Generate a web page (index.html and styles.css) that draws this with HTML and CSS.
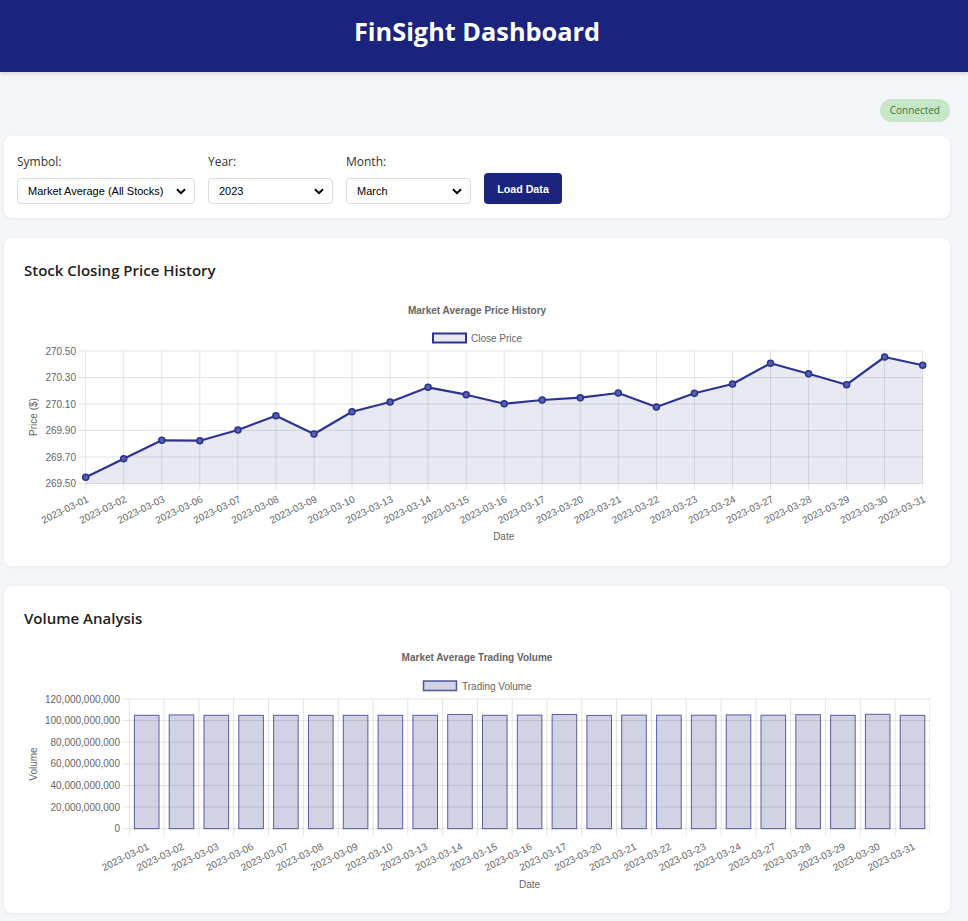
FILE: index.html
```html
<!DOCTYPE html>
<html lang="en">
<head>
<meta charset="utf-8">
<title>FinSight Dashboard</title>
<link rel="stylesheet" href="styles.css">
</head>
<body>
<header class="app-header">
  <h1 class="app-title">FinSight Dashboard</h1>
</header>
<main class="container">
  <div class="status-row"><span class="status-badge">Connected</span></div>

  <section class="card controls">
    <div class="control">
      <label class="control-label" for="symbol">Symbol:</label>
      <select id="symbol" class="select select-wide"><option>Market Average (All Stocks)</option></select>
    </div>
    <div class="control">
      <label class="control-label" for="year">Year:</label>
      <select id="year" class="select"><option>2023</option></select>
    </div>
    <div class="control">
      <label class="control-label" for="month">Month:</label>
      <select id="month" class="select"><option>March</option></select>
    </div>
    <button class="btn-load">Load Data</button>
  </section>

  <section class="card chart-card">
    <h3 class="card-title">Stock Closing Price History</h3>
    <svg class="chart chart-price" width="906" height="248" viewBox="24 298 906 248">
      <text class="c-title" x="477" y="313.5" text-anchor="middle">Market Average Price History</text>
      <rect class="legend-line" x="433" y="333.5" width="33" height="9"/>
      <text class="c-text" x="471" y="341.5">Close Price</text>
      <g class="grid">
        <line x1="78" y1="351" x2="922.7" y2="351"/>
        <line x1="78" y1="377.5" x2="922.7" y2="377.5"/>
        <line x1="78" y1="404" x2="922.7" y2="404"/>
        <line x1="78" y1="430.5" x2="922.7" y2="430.5"/>
        <line x1="78" y1="457" x2="922.7" y2="457"/>
        <line x1="78" y1="483.5" x2="922.7" y2="483.5"/>
        <line x1="85.7" y1="351" x2="85.7" y2="490"/>
        <line x1="123.7" y1="351" x2="123.7" y2="490"/>
        <line x1="161.8" y1="351" x2="161.8" y2="490"/>
        <line x1="199.8" y1="351" x2="199.8" y2="490"/>
        <line x1="237.9" y1="351" x2="237.9" y2="490"/>
        <line x1="275.9" y1="351" x2="275.9" y2="490"/>
        <line x1="314" y1="351" x2="314" y2="490"/>
        <line x1="352" y1="351" x2="352" y2="490"/>
        <line x1="390.1" y1="351" x2="390.1" y2="490"/>
        <line x1="428.1" y1="351" x2="428.1" y2="490"/>
        <line x1="466.2" y1="351" x2="466.2" y2="490"/>
        <line x1="504.2" y1="351" x2="504.2" y2="490"/>
        <line x1="542.2" y1="351" x2="542.2" y2="490"/>
        <line x1="580.3" y1="351" x2="580.3" y2="490"/>
        <line x1="618.3" y1="351" x2="618.3" y2="490"/>
        <line x1="656.4" y1="351" x2="656.4" y2="490"/>
        <line x1="694.4" y1="351" x2="694.4" y2="490"/>
        <line x1="732.5" y1="351" x2="732.5" y2="490"/>
        <line x1="770.5" y1="351" x2="770.5" y2="490"/>
        <line x1="808.6" y1="351" x2="808.6" y2="490"/>
        <line x1="846.6" y1="351" x2="846.6" y2="490"/>
        <line x1="884.6" y1="351" x2="884.6" y2="490"/>
        <line x1="922.7" y1="351" x2="922.7" y2="490"/>
      </g>
      <g class="c-text" text-anchor="end">
        <text x="76" y="354.5">270.50</text>
        <text x="76" y="381">270.30</text>
        <text x="76" y="407.5">270.10</text>
        <text x="76" y="434">269.90</text>
        <text x="76" y="460.5">269.70</text>
        <text x="76" y="487">269.50</text>
      </g>
      <text class="c-text" x="0" y="0" text-anchor="middle" transform="translate(36.5 417) rotate(-90)">Price ($)</text>
      <polygon class="area-fill" points="85.7,477.3 123.7,458.7 161.8,440.3 199.8,440.7 237.9,430 275.9,415.7 314,434 352,411.7 390.1,402 428.1,387.3 466.2,394.7 504.2,403.7 542.2,400 580.3,397.7 618.3,393 656.4,407 694.4,393.3 732.5,384 770.5,363.3 808.6,373.7 846.6,384.7 884.6,357 922.7,365.3 922.7,483.5 85.7,483.5"/>
      <polyline class="area-line" points="85.7,477.3 123.7,458.7 161.8,440.3 199.8,440.7 237.9,430 275.9,415.7 314,434 352,411.7 390.1,402 428.1,387.3 466.2,394.7 504.2,403.7 542.2,400 580.3,397.7 618.3,393 656.4,407 694.4,393.3 732.5,384 770.5,363.3 808.6,373.7 846.6,384.7 884.6,357 922.7,365.3"/>
      <g class="points">
        <circle cx="85.7" cy="477.3" r="3"/>
        <circle cx="123.7" cy="458.7" r="3"/>
        <circle cx="161.8" cy="440.3" r="3"/>
        <circle cx="199.8" cy="440.7" r="3"/>
        <circle cx="237.9" cy="430" r="3"/>
        <circle cx="275.9" cy="415.7" r="3"/>
        <circle cx="314" cy="434" r="3"/>
        <circle cx="352" cy="411.7" r="3"/>
        <circle cx="390.1" cy="402" r="3"/>
        <circle cx="428.1" cy="387.3" r="3"/>
        <circle cx="466.2" cy="394.7" r="3"/>
        <circle cx="504.2" cy="403.7" r="3"/>
        <circle cx="542.2" cy="400" r="3"/>
        <circle cx="580.3" cy="397.7" r="3"/>
        <circle cx="618.3" cy="393" r="3"/>
        <circle cx="656.4" cy="407" r="3"/>
        <circle cx="694.4" cy="393.3" r="3"/>
        <circle cx="732.5" cy="384" r="3"/>
        <circle cx="770.5" cy="363.3" r="3"/>
        <circle cx="808.6" cy="373.7" r="3"/>
        <circle cx="846.6" cy="384.7" r="3"/>
        <circle cx="884.6" cy="357" r="3"/>
        <circle cx="922.7" cy="365.3" r="3"/>
      </g>
      <g class="c-text" text-anchor="end">
        <text transform="translate(86.2 495) rotate(-26)" y="7.2">2023-03-01</text>
        <text transform="translate(124.2 495) rotate(-26)" y="7.2">2023-03-02</text>
        <text transform="translate(162.3 495) rotate(-26)" y="7.2">2023-03-03</text>
        <text transform="translate(200.3 495) rotate(-26)" y="7.2">2023-03-06</text>
        <text transform="translate(238.4 495) rotate(-26)" y="7.2">2023-03-07</text>
        <text transform="translate(276.4 495) rotate(-26)" y="7.2">2023-03-08</text>
        <text transform="translate(314.5 495) rotate(-26)" y="7.2">2023-03-09</text>
        <text transform="translate(352.5 495) rotate(-26)" y="7.2">2023-03-10</text>
        <text transform="translate(390.6 495) rotate(-26)" y="7.2">2023-03-13</text>
        <text transform="translate(428.6 495) rotate(-26)" y="7.2">2023-03-14</text>
        <text transform="translate(466.7 495) rotate(-26)" y="7.2">2023-03-15</text>
        <text transform="translate(504.7 495) rotate(-26)" y="7.2">2023-03-16</text>
        <text transform="translate(542.7 495) rotate(-26)" y="7.2">2023-03-17</text>
        <text transform="translate(580.8 495) rotate(-26)" y="7.2">2023-03-20</text>
        <text transform="translate(618.8 495) rotate(-26)" y="7.2">2023-03-21</text>
        <text transform="translate(656.9 495) rotate(-26)" y="7.2">2023-03-22</text>
        <text transform="translate(694.9 495) rotate(-26)" y="7.2">2023-03-23</text>
        <text transform="translate(733 495) rotate(-26)" y="7.2">2023-03-24</text>
        <text transform="translate(771 495) rotate(-26)" y="7.2">2023-03-27</text>
        <text transform="translate(809.1 495) rotate(-26)" y="7.2">2023-03-28</text>
        <text transform="translate(847.1 495) rotate(-26)" y="7.2">2023-03-29</text>
        <text transform="translate(885.1 495) rotate(-26)" y="7.2">2023-03-30</text>
        <text transform="translate(923.2 495) rotate(-26)" y="7.2">2023-03-31</text>
      </g>
      <text class="c-text" x="503.7" y="540.3" text-anchor="middle">Date</text>
    </svg>
  </section>

  <section class="card chart-card">
    <h3 class="card-title">Volume Analysis</h3>
    <svg class="chart chart-volume" width="906" height="247" viewBox="24 646 906 247">
      <text class="c-title" x="477" y="661.2" text-anchor="middle">Market Average Trading Volume</text>
      <rect class="legend-bar" x="423.5" y="681" width="33" height="9.5"/>
      <text class="c-text" x="462" y="689.5">Trading Volume</text>
      <g class="grid">
        <line x1="122.5" y1="699" x2="930" y2="699"/>
        <line x1="122.5" y1="720.6" x2="930" y2="720.6"/>
        <line x1="122.5" y1="742.2" x2="930" y2="742.2"/>
        <line x1="122.5" y1="763.9" x2="930" y2="763.9"/>
        <line x1="122.5" y1="785.5" x2="930" y2="785.5"/>
        <line x1="122.5" y1="807.1" x2="930" y2="807.1"/>
        <line x1="122.5" y1="828.7" x2="930" y2="828.7"/>
        <line x1="129.3" y1="699" x2="129.3" y2="835.5"/>
        <line x1="164.1" y1="699" x2="164.1" y2="835.5"/>
        <line x1="198.9" y1="699" x2="198.9" y2="835.5"/>
        <line x1="233.7" y1="699" x2="233.7" y2="835.5"/>
        <line x1="268.5" y1="699" x2="268.5" y2="835.5"/>
        <line x1="303.4" y1="699" x2="303.4" y2="835.5"/>
        <line x1="338.2" y1="699" x2="338.2" y2="835.5"/>
        <line x1="373" y1="699" x2="373" y2="835.5"/>
        <line x1="407.8" y1="699" x2="407.8" y2="835.5"/>
        <line x1="442.6" y1="699" x2="442.6" y2="835.5"/>
        <line x1="477.4" y1="699" x2="477.4" y2="835.5"/>
        <line x1="512.2" y1="699" x2="512.2" y2="835.5"/>
        <line x1="547" y1="699" x2="547" y2="835.5"/>
        <line x1="581.8" y1="699" x2="581.8" y2="835.5"/>
        <line x1="616.6" y1="699" x2="616.6" y2="835.5"/>
        <line x1="651.5" y1="699" x2="651.5" y2="835.5"/>
        <line x1="686.3" y1="699" x2="686.3" y2="835.5"/>
        <line x1="721.1" y1="699" x2="721.1" y2="835.5"/>
        <line x1="755.9" y1="699" x2="755.9" y2="835.5"/>
        <line x1="790.7" y1="699" x2="790.7" y2="835.5"/>
        <line x1="825.5" y1="699" x2="825.5" y2="835.5"/>
        <line x1="860.3" y1="699" x2="860.3" y2="835.5"/>
        <line x1="895.1" y1="699" x2="895.1" y2="835.5"/>
        <line x1="929.9" y1="699" x2="929.9" y2="835.5"/>
      </g>
      <g class="c-text" text-anchor="end">
        <text x="120" y="702.5">120,000,000,000</text>
        <text x="120" y="724.1">100,000,000,000</text>
        <text x="120" y="745.7">80,000,000,000</text>
        <text x="120" y="767.4">60,000,000,000</text>
        <text x="120" y="789">40,000,000,000</text>
        <text x="120" y="810.6">20,000,000,000</text>
        <text x="120" y="832.2">0</text>
      </g>
      <text class="c-text" x="0" y="0" text-anchor="middle" transform="translate(36.5 764) rotate(-90)">Volume</text>
      <g class="bars">
        <rect x="134.4" y="715.3" width="24.6" height="113.4"/>
        <rect x="169.2" y="714.9" width="24.6" height="113.8"/>
        <rect x="204" y="715.3" width="24.6" height="113.4"/>
        <rect x="238.8" y="715.3" width="24.6" height="113.4"/>
        <rect x="273.6" y="715.3" width="24.6" height="113.4"/>
        <rect x="308.5" y="715.3" width="24.6" height="113.4"/>
        <rect x="343.3" y="715.3" width="24.6" height="113.4"/>
        <rect x="378.1" y="715.3" width="24.6" height="113.4"/>
        <rect x="412.9" y="715.3" width="24.6" height="113.4"/>
        <rect x="447.7" y="714.5" width="24.6" height="114.2"/>
        <rect x="482.5" y="715.3" width="24.6" height="113.4"/>
        <rect x="517.3" y="715.1" width="24.6" height="113.6"/>
        <rect x="552.1" y="714.5" width="24.6" height="114.2"/>
        <rect x="586.9" y="715.4" width="24.6" height="113.3"/>
        <rect x="621.7" y="715.1" width="24.6" height="113.6"/>
        <rect x="656.6" y="715.2" width="24.6" height="113.5"/>
        <rect x="691.4" y="715.2" width="24.6" height="113.5"/>
        <rect x="726.2" y="714.9" width="24.6" height="113.8"/>
        <rect x="761" y="715.2" width="24.6" height="113.5"/>
        <rect x="795.8" y="714.7" width="24.6" height="114"/>
        <rect x="830.6" y="715.3" width="24.6" height="113.4"/>
        <rect x="865.4" y="714.3" width="24.6" height="114.4"/>
        <rect x="900.2" y="715.3" width="24.6" height="113.4"/>
      </g>
      <g class="c-text" text-anchor="end">
        <text transform="translate(146.7 842.3) rotate(-26)" y="7.2">2023-03-01</text>
        <text transform="translate(181.5 842.3) rotate(-26)" y="7.2">2023-03-02</text>
        <text transform="translate(216.3 842.3) rotate(-26)" y="7.2">2023-03-03</text>
        <text transform="translate(251.1 842.3) rotate(-26)" y="7.2">2023-03-06</text>
        <text transform="translate(285.9 842.3) rotate(-26)" y="7.2">2023-03-07</text>
        <text transform="translate(320.8 842.3) rotate(-26)" y="7.2">2023-03-08</text>
        <text transform="translate(355.6 842.3) rotate(-26)" y="7.2">2023-03-09</text>
        <text transform="translate(390.4 842.3) rotate(-26)" y="7.2">2023-03-10</text>
        <text transform="translate(425.2 842.3) rotate(-26)" y="7.2">2023-03-13</text>
        <text transform="translate(460 842.3) rotate(-26)" y="7.2">2023-03-14</text>
        <text transform="translate(494.8 842.3) rotate(-26)" y="7.2">2023-03-15</text>
        <text transform="translate(529.6 842.3) rotate(-26)" y="7.2">2023-03-16</text>
        <text transform="translate(564.4 842.3) rotate(-26)" y="7.2">2023-03-17</text>
        <text transform="translate(599.2 842.3) rotate(-26)" y="7.2">2023-03-20</text>
        <text transform="translate(634 842.3) rotate(-26)" y="7.2">2023-03-21</text>
        <text transform="translate(668.9 842.3) rotate(-26)" y="7.2">2023-03-22</text>
        <text transform="translate(703.7 842.3) rotate(-26)" y="7.2">2023-03-23</text>
        <text transform="translate(738.5 842.3) rotate(-26)" y="7.2">2023-03-24</text>
        <text transform="translate(773.3 842.3) rotate(-26)" y="7.2">2023-03-27</text>
        <text transform="translate(808.1 842.3) rotate(-26)" y="7.2">2023-03-28</text>
        <text transform="translate(842.9 842.3) rotate(-26)" y="7.2">2023-03-29</text>
        <text transform="translate(877.7 842.3) rotate(-26)" y="7.2">2023-03-30</text>
        <text transform="translate(912.5 842.3) rotate(-26)" y="7.2">2023-03-31</text>
      </g>
      <text class="c-text" x="529.6" y="888" text-anchor="middle">Date</text>
    </svg>
  </section>
</main>
</body>
</html>
```
FILE: styles.css
```css
* { box-sizing: border-box; }

body {
  margin: 0;
  background: #f5f6fa;
  font-family: "Open Sans", "Noto Sans", sans-serif;
  color: #222;
}

.app-header {
  background: #1a237e;
  height: 72px;
  display: flex;
  align-items: center;
  justify-content: center;
  padding-right: 14px;
  box-shadow: 0 2px 4px rgba(0, 0, 0, 0.12);
}

.app-title {
  margin: 0;
  color: #fff;
  font-size: 25.3px;
  font-weight: 700;
  line-height: 1;
  padding-bottom: 8px;
}

.container {
  width: 946px;
  margin-left: 4px;
  padding: 27px 0 20px;
}

.status-row {
  display: flex;
  justify-content: flex-end;
  margin-bottom: 14px;
}

.status-badge {
  display: inline-block;
  height: 23px;
  line-height: 23px;
  padding: 0 10px;
  border-radius: 12px;
  background: #c8e6c9;
  color: #2e7d32;
  font-size: 10px;
}

.card {
  background: #fff;
  border-radius: 8px;
  box-shadow: 0 1px 4px rgba(0, 0, 0, 0.06);
  margin-bottom: 20px;
}

.controls {
  display: flex;
  align-items: flex-end;
  gap: 13px;
  padding: 16px 13px 14px;
}

.control {
  display: flex;
  flex-direction: column;
}

.control-label {
  font-size: 12px;
  line-height: 20px;
  margin-bottom: 6px;
  color: #333;
}

.select {
  -webkit-appearance: none;
  appearance: none;
  width: 125px;
  height: 26px;
  border: 1px solid #dcdcdc;
  border-radius: 4px;
  background: #fff url("data:image/svg+xml,%3Csvg xmlns='http://www.w3.org/2000/svg' width='10' height='7' viewBox='0 0 10 7'%3E%3Cpath d='M1 1.2l4 4 4-4' fill='none' stroke='%23000' stroke-width='2'/%3E%3C/svg%3E") no-repeat right 8px center;
  padding: 0 24px 0 10px;
  font-family: "Liberation Sans", Arial, sans-serif;
  font-size: 11px;
  color: #000;
}

.select-wide { width: 178px; }

.btn-load {
  height: 31px;
  width: 78px;
  border: none;
  border-radius: 4px;
  background: #1a237e;
  color: #fff;
  font-family: "Liberation Sans", Arial, sans-serif;
  font-weight: 700;
  font-size: 10.7px;
}

.chart-card {
  padding: 20px;
}

.card-title {
  margin: 0 0 16px;
  font-size: 15px;
  line-height: 24px;
  font-weight: 600;
  color: #222;
}

.chart {
  display: block;
  font-family: "Liberation Sans", Arial, sans-serif;
}

.c-title {
  font-size: 10px;
  font-weight: 700;
  fill: #666;
}

.c-text {
  font-size: 10px;
  fill: #666;
}

.grid line {
  stroke: rgba(0, 0, 0, 0.1);
  stroke-width: 1;
}

.legend-line {
  fill: rgba(26, 35, 126, 0.1);
  stroke: #2c3490;
  stroke-width: 2;
}

.legend-bar {
  fill: rgba(26, 35, 126, 0.2);
  stroke: rgba(26, 35, 126, 0.75);
  stroke-width: 1.5;
}

.area-fill {
  fill: rgba(26, 35, 126, 0.1);
}

.area-line {
  fill: none;
  stroke: #2c3490;
  stroke-width: 2.2;
  stroke-linejoin: round;
}

.points circle {
  fill: #5a60a8;
  stroke: #283390;
  stroke-width: 1.5;
}

.bars rect {
  fill: rgba(26, 35, 126, 0.2);
  stroke: rgba(26, 35, 126, 0.7);
  stroke-width: 1;
}
```
